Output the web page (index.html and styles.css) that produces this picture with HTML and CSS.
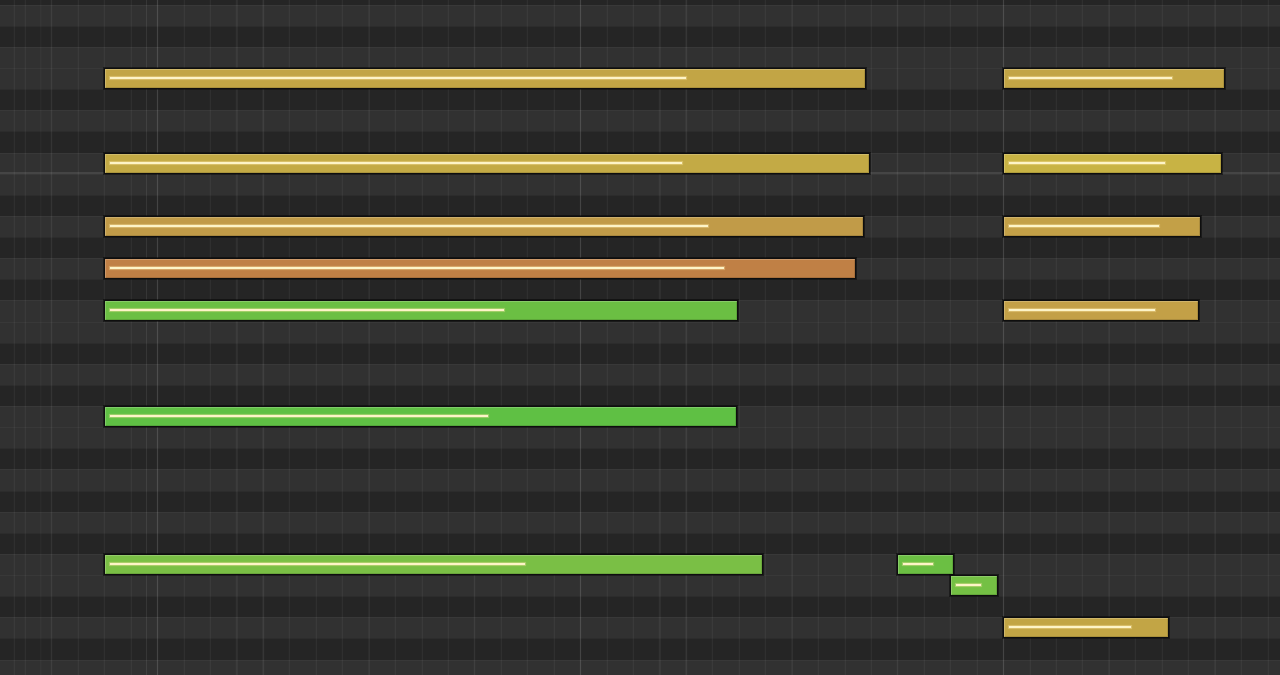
FILE: index.html
```html
<!DOCTYPE html>
<html>
<head>
<meta charset="utf-8">
<link rel="stylesheet" href="styles.css">
</head>
<body>
<div class="roll">
  <div class="rows">
    <div class="row b"></div>
    <div class="row w"></div>
    <div class="row b"></div>
    <div class="row w"></div>
    <div class="row w"></div>
    <div class="row b"></div>
    <div class="row w"></div>
    <div class="row b"></div>
    <div class="row w oct"></div>
    <div class="row w"></div>
    <div class="row b"></div>
    <div class="row w"></div>
    <div class="row b"></div>
    <div class="row w"></div>
    <div class="row b"></div>
    <div class="row w"></div>
    <div class="row w"></div>
    <div class="row b"></div>
    <div class="row w"></div>
    <div class="row b"></div>
    <div class="row w"></div>
    <div class="row w"></div>
    <div class="row b"></div>
    <div class="row w"></div>
    <div class="row b"></div>
    <div class="row w"></div>
    <div class="row b"></div>
    <div class="row w"></div>
    <div class="row w"></div>
    <div class="row b"></div>
    <div class="row w"></div>
    <div class="row b"></div>
    <div class="row w"></div>
  </div>
  <div class="grid"></div>
  <div class="notes">
    <div class="note gold" style="left:104px;top:68px;width:762px"><span class="vel" style="width:576px"></span></div>
    <div class="note gold" style="left:1003px;top:68px;width:222px"><span class="vel" style="width:163px"></span></div>
    <div class="note gold2" style="left:104px;top:152.5px;width:766px"><span class="vel" style="width:572px"></span></div>
    <div class="note yel" style="left:1003px;top:152.5px;width:219px"><span class="vel" style="width:156px"></span></div>
    <div class="note amber" style="left:104px;top:215.9px;width:760px"><span class="vel" style="width:598px"></span></div>
    <div class="note amber2" style="left:1003px;top:215.9px;width:198px"><span class="vel" style="width:150px"></span></div>
    <div class="note orange" style="left:104px;top:258.1px;width:752px"><span class="vel" style="width:614px"></span></div>
    <div class="note green" style="left:104px;top:300.4px;width:634px"><span class="vel" style="width:394px"></span></div>
    <div class="note amber2" style="left:1003px;top:300.4px;width:196px"><span class="vel" style="width:146px"></span></div>
    <div class="note green2" style="left:104px;top:406px;width:633px"><span class="vel" style="width:378px"></span></div>
    <div class="note green3" style="left:104px;top:553.9px;width:659px"><span class="vel" style="width:415px"></span></div>
    <div class="note green" style="left:897px;top:553.9px;width:57px"><span class="vel" style="width:30px"></span></div>
    <div class="note green4" style="left:950px;top:575px;width:48px"><span class="vel" style="width:25px"></span></div>
    <div class="note gold" style="left:1003px;top:617.2px;width:166px"><span class="vel" style="width:122px"></span></div>
  </div>
</div>
</body>
</html>
```
FILE: styles.css
```css
html, body {
  margin: 0;
  padding: 0;
  background: #262626;
  font-family: "Liberation Sans", Arial, sans-serif;
}

.roll {
  position: relative;
  width: 1280px;
  height: 675px;
  overflow: hidden;
  background: #262626;
}

.rows {
  display: flex;
  flex-direction: column;
  margin-top: -16.5px;
}

.row {
  height: 21.125px;
  flex: 0 0 21.125px;
  box-sizing: border-box;
  box-shadow: inset 0 1px 0 rgba(255, 255, 255, 0.035);
}

.row.w {
  background: #313131;
}

.row.b {
  background: #252525;
}

.row.oct {
  box-shadow: inset 0 1px 0 rgba(255, 255, 255, 0.035), inset 0 -2px 0 #454545;
}

.grid {
  position: absolute;
  inset: 0;
  pointer-events: none;
  background-image:
    repeating-linear-gradient(to right, rgba(255, 255, 255, 0.08) 0 1px, transparent 1px 423px),
    repeating-linear-gradient(to right, rgba(255, 255, 255, 0.03) 0 1px, transparent 1px 105.75px),
    repeating-linear-gradient(to right, rgba(255, 255, 255, 0.055) 0 1px, transparent 1px 26.4375px);
  background-position: 157px 0, 51.25px 0, 24.81px 0;
  background-repeat: repeat-x;
}

.notes {
  position: absolute;
  inset: 0;
}

.note {
  position: absolute;
  height: 21px;
  box-sizing: border-box;
  border: 1px solid #0e0e0e;
  box-shadow:
    0 0 0 1px rgba(0, 0, 0, 0.45),
    inset 1px 1px 0 rgba(255, 255, 255, 0.2),
    inset -1px -1px 0 rgba(0, 0, 0, 0.12);
}

.vel {
  position: absolute;
  left: 5px;
  top: 8px;
  height: 2px;
  background: #fdf4c8;
  box-shadow: 0 0 1px 1px rgba(255, 236, 170, 0.4);
}

.gold { background: #c2a545; }
.gold2 { background: #c3aa45; }
.yel { background: #c8b344; }
.amber { background: #c19b48; }
.amber2 { background: #c3a047; }
.orange { background: #c08045; }
.green { background: #6bbf43; }
.green2 { background: #5fc044; }
.green3 { background: #7abf45; }
.green4 { background: #74c044; }
```
